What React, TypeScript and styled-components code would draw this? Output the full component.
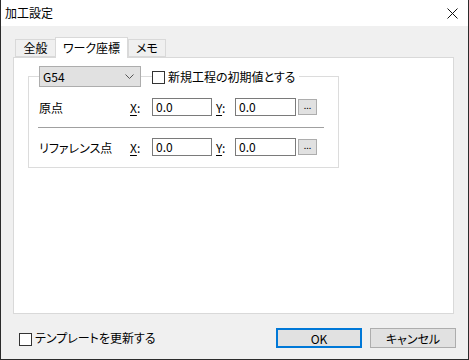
import React from "react";
import styled, { createGlobalStyle } from "styled-components";

const Global = createGlobalStyle`
  html, body { margin: 0; padding: 0; background: #fff; }
  body {
    font-family: "Noto Sans CJK JP", "Noto Sans", sans-serif;
    font-size: 12px;
    color: #000;
    font-feature-settings: "palt";
  }
  * { box-sizing: border-box; }
`;

const Window = styled.div`
  width: 469px;
  height: 360px;
  border: 1px solid #2b2b2b;
  border-top: none;
  display: flex;
  flex-direction: column;
  background: #f0f0f0;
`;

const TitleBar = styled.div`
  height: 26px;
  flex: none;
  background: #fff;
  display: flex;
  align-items: center;
  justify-content: space-between;
  padding-left: 4px;
  padding-right: 10px;
  font-size: 12px;
  line-height: 26px;
`;

const Body = styled.div`
  flex: 1;
  display: flex;
  flex-direction: column;
  padding: 11px 0 0 12px;
`;

const TabRow = styled.div`
  height: 20px;
  display: flex;
  align-items: flex-end;
  padding-left: 2px;
  position: relative;
  z-index: 1;
`;

const Tab = styled.div<{ $active?: boolean; $w: number }>`
  width: ${(p) => p.$w}px;
  height: ${(p) => (p.$active ? 21 : 18)}px;
  margin-bottom: ${(p) => (p.$active ? -1 : 0)}px;
  border: 1px solid #d9d9d9;
  border-bottom: ${(p) => (p.$active ? "none" : "1px solid #d9d9d9")};
  ${(p) => (p.$active ? "" : "border-right: none;")}
  background: ${(p) => (p.$active ? "#fff" : "#f0f0f0")};
  display: flex;
  align-items: center;
  justify-content: center;
  font-size: 12px;
  line-height: 16px;
  padding-bottom: ${(p) => (p.$active ? 1 : 0)}px;
  &:last-child { border-right: 1px solid #d9d9d9; }
`;

const Panel = styled.div`
  width: 441px;
  height: 257px;
  border: 1px solid #d9d9d9;
  background: #fff;
  padding: 18px 0 0 14px;
`;

const GroupBox = styled.div`
  width: 311px;
  height: 92px;
  border: 1px solid #dcdcdc;
  display: flex;
  flex-direction: column;
`;

const GroupHeader = styled.div`
  display: flex;
  align-items: center;
  height: 21px;
  margin: -11px 0 0 10px;
`;

const Combo = styled.div`
  width: 102px;
  height: 21px;
  background: #e1e1e1;
  border: 1px solid #adadad;
  display: flex;
  align-items: center;
  justify-content: space-between;
  padding: 0 6px 0 3px;
  font-size: 12px;
`;

const CheckLabel = styled.label`
  display: flex;
  align-items: center;
  background: #fff;
  margin-left: 11px;
  padding-right: 4px;
  gap: 3px;
  font-size: 12px;
  line-height: 16px;
`;

const FooterCheckLabel = styled(CheckLabel)`
  background: transparent;
  margin-left: 0;
`;

const Box = styled.span`
  width: 13px;
  height: 13px;
  border: 1px solid #333;
  background: #fff;
  flex: none;
  margin-top: 2px;
`;

const Row = styled.div<{ $mt: number }>`
  display: flex;
  align-items: center;
  height: 18px;
  margin-top: ${(p) => p.$mt}px;
  padding-left: 10px;
`;

const RowLabel = styled.span`
  width: 91px;
  font-size: 12px;
`;

const AxisLabel = styled.span<{ $w: number; $ml?: number }>`
  width: ${(p) => p.$w}px;
  margin-left: ${(p) => p.$ml ?? 0}px;
  font-size: 12px;
  flex: none;
  u { text-decoration: underline; text-underline-offset: 2px; }
`;

const Input = styled.div<{ $w: number }>`
  width: ${(p) => p.$w}px;
  height: 18px;
  border: 1px solid #7a7a7a;
  background: #fff;
  padding-left: 3px;
  font-size: 12px;
  line-height: 16px;
  flex: none;
`;

const DotButton = styled.div`
  width: 19px;
  height: 16px;
  margin-left: 2px;
  background: #e1e1e1;
  border: 1px solid #adadad;
  font-size: 9px;
  line-height: 12px;
  text-align: center;
  flex: none;
`;

const Separator = styled.div`
  height: 1px;
  background: #a0a0a0;
  margin: 11px 0 0 9px;
  width: 286px;
`;

const Footer = styled.div`
  display: flex;
  align-items: center;
  padding: 14px 12px 0 6px;
  height: 34px;
`;

const Spacer = styled.div`
  flex: 1;
`;

const Button = styled.div<{ $default?: boolean }>`
  width: 86px;
  height: 20px;
  margin-left: ${(p) => (p.$default ? 0 : 8)}px;
  background: #e1e1e1;
  border: ${(p) => (p.$default ? "2px solid #0078d7" : "1px solid #adadad")};
  display: flex;
  align-items: center;
  justify-content: center;
  font-size: 12px;
`;

const Chevron = () => (
  <svg width="9" height="5" viewBox="0 0 9 5">
    <path d="M0.5 0.5 L4.5 4.5 L8.5 0.5" fill="none" stroke="#555" strokeWidth="1" />
  </svg>
);

const CloseIcon = () => (
  <svg width="11" height="11" viewBox="0 0 11 11">
    <path d="M0.5 0.5 L10.5 10.5 M10.5 0.5 L0.5 10.5" stroke="#111" strokeWidth="1" />
  </svg>
);

const CoordRow = ({ label, mt }: { label: string; mt: number }) => (
  <Row $mt={mt}>
    <RowLabel>{label}</RowLabel>
    <AxisLabel $w={22}>
      <u>X</u>:
    </AxisLabel>
    <Input $w={60}>0.0</Input>
    <AxisLabel $w={19} $ml={4}>
      <u>Y</u>:
    </AxisLabel>
    <Input $w={61}>0.0</Input>
    <DotButton>...</DotButton>
  </Row>
);

export default function App() {
  return (
    <>
      <Global />
      <Window>
        <TitleBar>
          <span>加工設定</span>
          <CloseIcon />
        </TitleBar>
        <Body>
          <TabRow>
            <Tab $w={40}>全般</Tab>
            <Tab $w={73} $active>
              ワーク座標
            </Tab>
            <Tab $w={38}>メモ</Tab>
          </TabRow>
          <Panel>
            <GroupBox>
              <GroupHeader>
                <Combo>
                  <span>G54</span>
                  <Chevron />
                </Combo>
                <CheckLabel>
                  <Box />
                  新規工程の初期値とする
                </CheckLabel>
              </GroupHeader>
              <CoordRow label="原点" mt={11} />
              <Separator />
              <CoordRow label="リファレンス点" mt={10} />
            </GroupBox>
          </Panel>
          <Footer>
            <FooterCheckLabel>
              <Box />
              テンプレートを更新する
            </FooterCheckLabel>
            <Spacer />
            <Button $default>OK</Button>
            <Button>キャンセル</Button>
          </Footer>
        </Body>
      </Window>
    </>
  );
}
